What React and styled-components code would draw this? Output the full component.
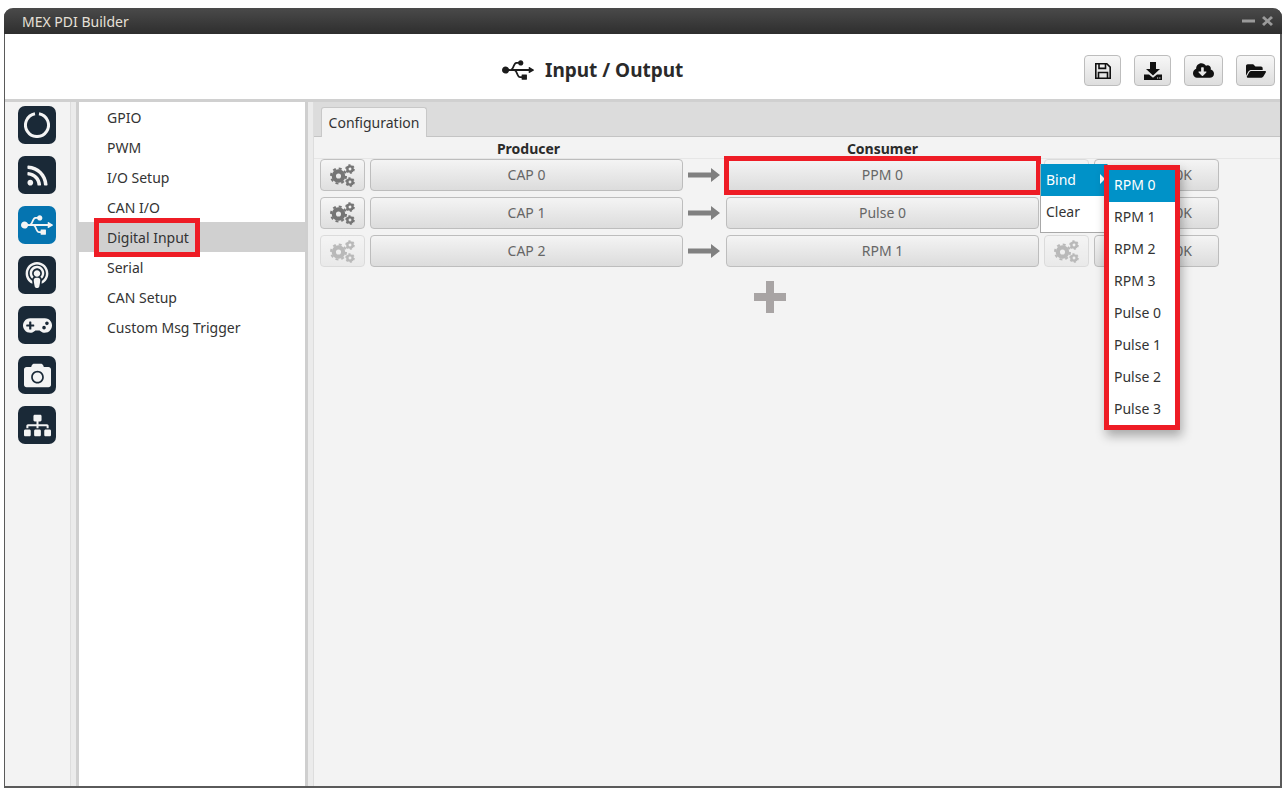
import React from 'react';
import styled, { createGlobalStyle } from 'styled-components';
import { FaCloudDownloadAlt, FaFolderOpen, FaUsb, FaRss, FaPodcast, FaGamepad, FaCamera, FaSitemap } from 'react-icons/fa';

const GlobalStyle = createGlobalStyle`
  html, body {
    margin: 0;
    padding: 0;
    background: #ffffff;
    font-family: "Noto Sans", "Open Sans", sans-serif;
  }
`;

const Page = styled.div`
  width: 1286px;
  height: 791px;
  padding: 8px 4px 3px 4px;
  box-sizing: border-box;
  position: relative;
  overflow: hidden;
`;

const Window = styled.div`
  width: 1278px;
  height: 780px;
  display: flex;
  flex-direction: column;
  border: solid #5a5a5a;
  border-width: 0 2px 2px 1px;
  border-radius: 9px 9px 0 0;
  box-sizing: border-box;
  background: #f3f3f3;
`;

const TitleBar = styled.div`
  height: 26px;
  flex: none;
  margin: 0 -2px 0 -1px;
  padding: 0 9px 0 18px;
  display: flex;
  align-items: center;
  justify-content: space-between;
  border-radius: 9px 9px 0 0;
  background: linear-gradient(#4a4a4a, #2e2e2e);
  color: #e6e0d8;
  font-size: 14px;
`;

const Header = styled.div`
  height: 65px;
  flex: none;
  display: flex;
  align-items: center;
  background: #fff;
  padding: 8px 5px 0 497px;
  box-sizing: border-box;
`;

const PageTitle = styled.div`
  display: flex;
  align-items: center;
  gap: 11px;
  padding-bottom: 2px;
  font-size: 19px;
  font-weight: 700;
  color: #2a2a2a;
  svg { font-size: 32px; color: #1c1c1c; }
`;

const Tools = styled.div`
  margin-left: auto;
  display: flex;
  gap: 13px;
`;

const ToolButton = styled.div`
  width: ${p => p.$w}px;
  height: 31px;
  display: flex;
  align-items: center;
  justify-content: center;
  border: 1px solid #bdbdbd;
  border-radius: 4px;
  box-sizing: border-box;
  background: linear-gradient(#f7f7f7, #dedede);
  color: #111;
  font-size: ${p => p.$icon}px;
`;

const Body = styled.div`
  flex: 1;
  display: flex;
  min-height: 0;
  border-top: 3px solid #d0d0d0;
`;

const Rail = styled.div`
  width: 65px;
  flex: none;
  padding: 4px 0 0 13px;
  box-sizing: border-box;
  display: flex;
  flex-direction: column;
  gap: 12px;
  background: #f3f3f3;
`;

const RailButton = styled.div`
  width: 38px;
  height: 38px;
  border-radius: 7px;
  display: flex;
  align-items: center;
  justify-content: center;
  background: ${p => (p.$active ? '#0574b0' : '#1a2937')};
  color: #f4f4f4;
  font-size: ${p => p.$icon || 23}px;
`;

const Splitter = styled.div`
  width: 9px;
  flex: none;
  box-sizing: border-box;
  background: #ebebeb;
  border-left: 1px solid ${p => (p.$flip ? '#cfcfcf' : '#dddddd')};
  border-right: 3px solid ${p => (p.$flip ? '#dddddd' : '#cfcfcf')};
  ${p => p.$flip && 'border-left-width: 3px; border-right-width: 1px;'}
`;

const NavList = styled.div`
  width: 226px;
  flex: none;
  background: #fff;
`;

const NavItem = styled.div`
  height: 30px;
  line-height: 31px;
  padding-left: 28px;
  font-size: 14px;
  color: #333;
  background: ${p => (p.$selected ? '#d0d0d0' : 'transparent')};
`;

const Content = styled.div`
  flex: 1;
  display: flex;
  flex-direction: column;
  background: #f3f3f3;
`;

const TabBar = styled.div`
  height: 35px;
  flex: none;
  padding: 5px 0 0 7px;
  box-sizing: border-box;
  background: #dcdcdc;
  border-bottom: 1px solid #c4c4c4;
  display: flex;
`;

const Tab = styled.div`
  width: 106px;
  height: 30px;
  line-height: 29px;
  text-align: center;
  font-size: 14px;
  color: #333;
  background: #f3f3f3;
  border: 1px solid #c8c8c8;
  border-bottom: none;
  border-radius: 3px 3px 0 0;
  box-sizing: border-box;
`;

const Columns = styled.div`
  height: 22px;
  flex: none;
  box-sizing: border-box;
  padding-left: 58px;
  display: flex;
  border-bottom: 1px solid #e6e6e6;
`;

const ColumnTitle = styled.div`
  width: ${p => p.$w}px;
  margin-right: ${p => p.$gap}px;
  text-align: center;
  font-size: 14px;
  font-weight: 700;
  line-height: 24px;
  color: #2a2a2a;
`;

const Rows = styled.div`
  padding: 0 0 0 6px;
  display: flex;
  flex-direction: column;
  gap: 6px;
`;

const Row = styled.div`
  display: flex;
  align-items: center;
  height: 32px;
`;

const GearButton = styled.div`
  width: 45px;
  height: 32px;
  flex: none;
  margin: 0 5px 0 ${p => p.$left || 0}px;
  display: flex;
  align-items: center;
  justify-content: center;
  border: 1px solid #c0c0c0;
  border-radius: 4px;
  box-sizing: border-box;
  background: linear-gradient(#f6f6f6, #dfdfdf);
  ${p => p.$disabled && 'opacity: 0.45;'}
`;

const FieldButton = styled.div`
  width: ${p => p.$w}px;
  height: 32px;
  flex: none;
  line-height: 30px;
  padding-right: ${p => p.$endPad || 0}px;
  text-align: ${p => (p.$endPad ? 'right' : 'center')};
  font-size: 14px;
  color: #666;
  border: 1px solid #bdbdbd;
  border-radius: 4px;
  box-sizing: border-box;
  background: linear-gradient(#f4f4f4, #dcdcdc);
`;

const ArrowBox = styled.div`
  width: 43px;
  flex: none;
  display: flex;
  padding-left: 5px;
  box-sizing: border-box;
`;

const AddRow = styled.div`
  padding: 14px 0 0 440px;
`;

const Menu = styled.div`
  position: absolute;
  left: 1040px;
  top: 164px;
  width: 68px;
  height: 69px;
  background: #fff;
  border: solid #a8a8a8;
  border-width: 0 1px 1px 1px;
  box-sizing: border-box;
`;

const MenuItem = styled.div`
  height: 32px;
  padding: 0 0 ${p => p.$lift}px ${p => p.$pad}px;
  box-sizing: border-box;
  font-size: 14px;
  display: flex;
  align-items: center;
  color: ${p => (p.$hot ? '#fff' : '#333')};
  background: ${p => (p.$hot ? '#0092c8' : 'transparent')};
`;

const SubMenu = styled.div`
  position: absolute;
  left: 1104px;
  top: 165px;
  width: 76px;
  height: 265px;
  border: 5px solid #ee1c25;
  box-sizing: border-box;
  background: #fff;
  box-shadow: 2px 6px 10px rgba(0, 0, 0, 0.3);
`;

const Caret = styled.span`
  width: 0;
  height: 0;
  margin-left: 24px;
  border-left: 5px solid #fff;
  border-top: 5px solid transparent;
  border-bottom: 5px solid transparent;
`;

const RedBox = styled.div`
  position: absolute;
  left: ${p => p.$x}px;
  top: ${p => p.$y}px;
  width: ${p => p.$w}px;
  height: ${p => p.$h}px;
  border: 5px solid #ee1c25;
  box-sizing: border-box;
`;

const Ring = () => (
  <svg width="26" height="26" viewBox="0 0 26 26" fill="none">
    <path d="M11 1.7 A11.5 11.5 0 1 0 15 1.7" stroke="#f4f4f4" strokeWidth="3" />
  </svg>
);

const Arrow = () => (
  <svg width="32" height="14" viewBox="0 0 32 14">
    <path d="M0 4.5h23V0l9 7-9 7V9.5H0z" fill="#808080" />
  </svg>
);

const Plus = () => (
  <svg width="32" height="32" viewBox="0 0 32 32">
    <path d="M12 0h8v12h12v8H20v12h-8V20H0v-8h12z" fill="#a8a4a4" />
  </svg>
);

const WindowControls = () => (
  <svg width="31" height="12" viewBox="0 0 31 12">
    <path d="M0 4.5h13v3H0z" fill="#9a9a9a" />
    <path d="M22 1l3.5 3.2L29 1l2 2-3.5 3 3.5 3-2 2-3.5-3.2L22 11l-2-2 3.5-3L20 3z" fill="#9a9a9a" />
  </svg>
);

const SaveIcon = () => (
  <svg width="16" height="16" viewBox="0 0 16 16" fill="none" stroke="#111" strokeWidth="1.6">
    <path d="M.8.8h11l3.4 3.4v11H.8z" />
    <path d="M4 1v4.4h6.5V1M3.5 15V9.5h9V15" />
  </svg>
);

const DownloadTray = () => (
  <svg width="20" height="20" viewBox="0 0 20 20">
    <path d="M7 1h6v7h4l-7 6.5L3 8h4z" fill="#111" />
    <path d="M1 13.5h5l4 3.2 4-3.2h5V19H1z" fill="#111" />
    <path d="M14 16.5h1.2v1H14zM16.2 16.5h1.2v1h-1.2z" fill="#eee" />
  </svg>
);

// one toothed wheel: thick ring plus a dashed ring for the teeth
const Gear = ({ x, y, r, teeth }) => {
  const tooth = (2 * Math.PI * (r - 1)) / (teeth * 2);
  return (
    <g fill="none" stroke="#757575">
      <circle cx={x} cy={y} r={r * 0.55} strokeWidth={r * 0.5} />
      <circle cx={x} cy={y} r={r - 1} strokeWidth={2} strokeDasharray={`${tooth} ${tooth}`} />
    </g>
  );
};

const Gears = () => (
  <svg width="25" height="23" viewBox="0 0 25 23">
    <Gear x={8.5} y={12} r={8.5} teeth={8} />
    <Gear x={20} y={5} r={4.8} teeth={6} />
    <Gear x={20} y={18} r={4.8} teeth={6} />
  </svg>
);

const rows = [
  { producer: 'CAP 0', consumer: 'PPM 0' },
  { producer: 'CAP 1', consumer: 'Pulse 0' },
  { producer: 'CAP 2', consumer: 'RPM 1', off: true },
];

const navItems = ['GPIO', 'PWM', 'I/O Setup', 'CAN I/O', 'Digital Input', 'Serial', 'CAN Setup', 'Custom Msg Trigger'];
const subItems = ['RPM 0', 'RPM 1', 'RPM 2', 'RPM 3', 'Pulse 0', 'Pulse 1', 'Pulse 2', 'Pulse 3'];

const App = () => {
  return (
    <Page>
      <GlobalStyle />
      <Window>
        <TitleBar>
          <span>MEX PDI Builder</span>
          <WindowControls />
        </TitleBar>
        <Header>
          <PageTitle>
            <FaUsb />
            Input / Output
          </PageTitle>
          <Tools>
            <ToolButton $w={37}><SaveIcon /></ToolButton>
            <ToolButton $w={37}><DownloadTray /></ToolButton>
            <ToolButton $w={39} $icon={21}><FaCloudDownloadAlt /></ToolButton>
            <ToolButton $w={39} $icon={20}><FaFolderOpen /></ToolButton>
          </Tools>
        </Header>
        <Body>
          <Rail>
            <RailButton><Ring /></RailButton>
            <RailButton><FaRss /></RailButton>
            <RailButton $active $icon={32}><FaUsb /></RailButton>
            <RailButton $icon={26}><FaPodcast /></RailButton>
            <RailButton $icon={29}><FaGamepad /></RailButton>
            <RailButton $icon={27}><FaCamera /></RailButton>
            <RailButton $icon={27}><FaSitemap /></RailButton>
          </Rail>
          <Splitter />
          <NavList>
            {navItems.map((name) => (
              <NavItem key={name} $selected={name === 'Digital Input'}>{name}</NavItem>
            ))}
          </NavList>
          <Splitter $flip />
          <Content>
            <TabBar>
              <Tab>Configuration</Tab>
            </TabBar>
            <Columns>
              <ColumnTitle $w={313} $gap={41}>Producer</ColumnTitle>
              <ColumnTitle $w={313} $gap={0}>Consumer</ColumnTitle>
            </Columns>
            <Rows>
              {rows.map((r) => (
                <Row key={r.producer}>
                  <GearButton $disabled={r.off}><Gears /></GearButton>
                  <FieldButton $w={313}>{r.producer}</FieldButton>
                  <ArrowBox><Arrow /></ArrowBox>
                  <FieldButton $w={313}>{r.consumer}</FieldButton>
                  <GearButton $left={5} $disabled><Gears /></GearButton>
                  <FieldButton $w={125} $endPad={26}>0K</FieldButton>
                </Row>
              ))}
            </Rows>
            <AddRow><Plus /></AddRow>
          </Content>
        </Body>
      </Window>
      <RedBox $x={94} $y={218} $w={106} $h={39} />
      <RedBox $x={724} $y={156} $w={317} $h={39} />
      <Menu>
        <MenuItem $hot $pad={5} $lift={2}>Bind<Caret /></MenuItem>
        <MenuItem $pad={5} $lift={2}>Clear</MenuItem>
      </Menu>
      <SubMenu>
        {subItems.map((name, i) => (
          <MenuItem key={name} $hot={i === 0} $pad={5} $lift={4}>{name}</MenuItem>
        ))}
      </SubMenu>
    </Page>
  );
};

export default App;
